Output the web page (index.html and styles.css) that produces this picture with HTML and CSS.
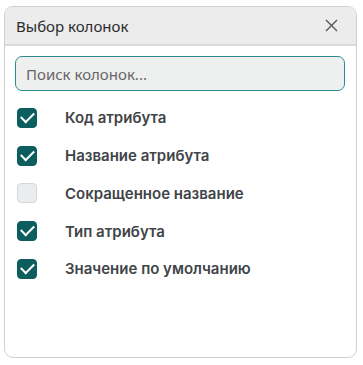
FILE: index.html
```html
<!DOCTYPE html>
<html lang="ru">
<head>
    <meta charset="UTF-8">
    <title>Выбор колонок</title>
    <link rel="stylesheet" href="styles.css">
</head>
<body>
    <div class="panel">
        <div class="panel-header">
            <span class="panel-title">Выбор колонок</span>
            <button class="close-btn" aria-label="Закрыть">
                <svg width="13" height="13" viewBox="0 0 13 13"><path d="M1 1L12 12M12 1L1 12" stroke="#555" stroke-width="1.4" fill="none"/></svg>
            </button>
        </div>
        <div class="panel-body">
            <input class="search" type="text" placeholder="Поиск колонок...">
            <ul class="columns">
                <li><span class="check on"></span>Код атрибута</li>
                <li><span class="check on"></span>Название атрибута</li>
                <li><span class="check"></span>Сокращенное название</li>
                <li><span class="check on"></span>Тип атрибута</li>
                <li><span class="check on"></span>Значение по умолчанию</li>
            </ul>
        </div>
    </div>
</body>
</html>
```

FILE: styles.css
```css
* {
    margin: 0;
    padding: 0;
    box-sizing: border-box;
}

body {
    font-family: Inter, "Liberation Sans", sans-serif;
    background: #fff;
    padding: 6px 6px 7px 4px;
}

.panel {
    width: 353px;
    height: 352px;
    border: 1px solid #cfcfcf;
    border-radius: 9px;
    overflow: hidden;
    background: #fff;
}

.panel-header {
    height: 39px;
    background: #ececec;
    border-bottom: 2px solid #d9dcdc;
    display: flex;
    align-items: center;
    justify-content: space-between;
    padding: 0 18px 0 11px;
}

.panel-title {
    font-family: "Noto Sans", "Liberation Sans", sans-serif;
    font-size: 15px;
    color: #2b2b2b;
}

.close-btn {
    border: none;
    background: none;
    display: flex;
}

.panel-body {
    padding: 10px 11px 0 10px;
}

.search {
    display: block;
    width: 100%;
    height: 35px;
    border: 1.5px solid #2d8c8c;
    border-radius: 7px;
    background: #eeefef;
    padding: 0 10px;
    font-family: "Noto Sans", "Liberation Sans", sans-serif;
    font-size: 15px;
    color: #333;
}

.search::placeholder {
    color: #666;
}

.columns {
    list-style: none;
    margin-top: 8px;
}

.columns li {
    display: flex;
    align-items: center;
    height: 37.75px;
    padding-left: 2px;
    font-size: 15px;
    font-weight: 600;
    color: #3f4448;
}

.check {
    width: 20px;
    height: 20px;
    border-radius: 4px;
    border: 1px solid #d4d8d8;
    background: #eaeded;
    margin-right: 28px;
    flex-shrink: 0;
    display: flex;
    align-items: center;
    justify-content: center;
}

.check.on {
    background: #0c5d5d;
    border-color: #0c5d5d;
}

.check.on::after {
    content: "";
    width: 11px;
    height: 6px;
    border-left: 2px solid #fff;
    border-bottom: 2px solid #fff;
    transform: translateY(-2px) rotate(-45deg);
}
```
